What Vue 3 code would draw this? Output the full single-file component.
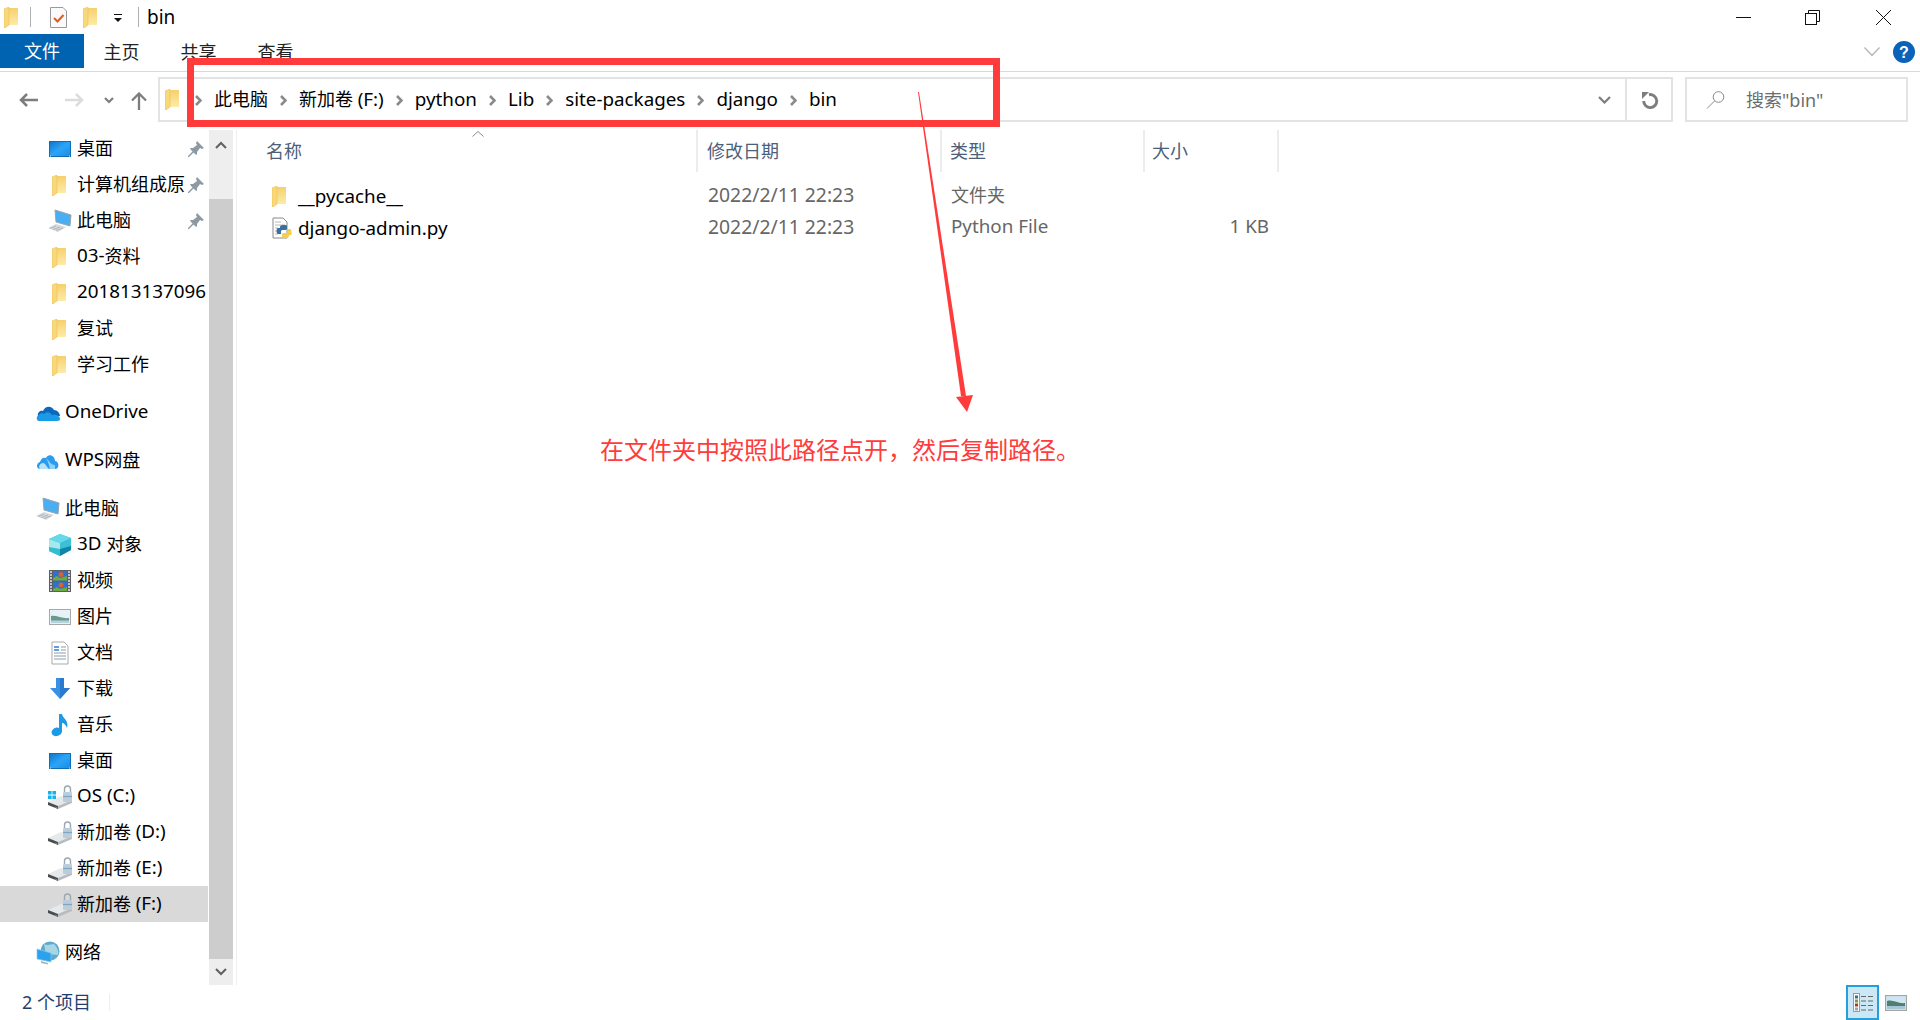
<script setup>
const runs = (s) => s.match(/[\x21-\x7e][\x20-\x7e]*|[^\x21-\x7e]+/g) || []
const isLat = (r) => /^[\x21-\x7e]/.test(r)
const crumbs = ['此电脑', '新加卷 (F:)', 'python', 'Lib', 'site-packages', 'django', 'bin']
const nav = [
  { icon: 'desktop', label: '桌面', pin: true },
  { icon: 'folder', label: '计算机组成原', pin: true },
  { icon: 'pc', label: '此电脑', pin: true },
  { icon: 'folder', label: '03-资料' },
  { icon: 'folder', label: '201813137096' },
  { icon: 'folder', label: '复试' },
  { icon: 'folder', label: '学习工作' },
  { icon: 'onedrive', label: 'OneDrive', top: true, gap: true },
  { icon: 'wps', label: 'WPS网盘', top: true, gap: true },
  { icon: 'pc', label: '此电脑', top: true, gap: true },
  { icon: 'cube', label: '3D 对象' },
  { icon: 'film', label: '视频' },
  { icon: 'photo', label: '图片' },
  { icon: 'doc', label: '文档' },
  { icon: 'down', label: '下载' },
  { icon: 'music', label: '音乐' },
  { icon: 'desktop', label: '桌面' },
  { icon: 'osdrive', label: 'OS (C:)' },
  { icon: 'drive', label: '新加卷 (D:)' },
  { icon: 'drive', label: '新加卷 (E:)' },
  { icon: 'drive', label: '新加卷 (F:)', selected: true },
  { icon: 'net', label: '网络', top: true, gap: true }
]
const files = [
  { icon: 'folder', cls: 'fic-folder', name: '__pycache__', date: '2022/2/11 22:23', type: '文件夹', size: '' },
  { icon: 'py', cls: 'fic-py', name: 'django-admin.py', date: '2022/2/11 22:23', type: 'Python File', size: '1 KB' }
]
const note = '在文件夹中按照此路径点开\uFF0C然后复制路径。'
</script>

<template>
  <div class="win">
    <svg class="defs" aria-hidden="true">
      <defs>
        <linearGradient id="gf" x1="0" y1="0" x2="0" y2="1">
          <stop offset="0" stop-color="#f6d06e" />
          <stop offset="1" stop-color="#fdeba8" />
        </linearGradient>
        <linearGradient id="gb" x1="0" y1="0" x2="1" y2="1">
          <stop offset="0" stop-color="#1273c9" />
          <stop offset=".5" stop-color="#2aa5f6" />
          <stop offset="1" stop-color="#1b8be4" />
        </linearGradient>
        <symbol id="folder" viewBox="0 0 14 21">
          <path d="M4 1H14V18H4Z" fill="url(#gf)" />
          <path d="M0 2L5 0V18L1 21H0Z" fill="#f8d878" stroke="#eec158" stroke-width=".6" />
        </symbol>
        <symbol id="desktop" viewBox="0 0 24 24">
          <rect x="1.5" y="4.5" width="21" height="15" fill="url(#gb)" stroke="#0f6cb8" />
          <path d="M2 19H22" stroke="#cfe8fb" stroke-dasharray="1 18" />
        </symbol>
        <symbol id="pc" viewBox="0 0 24 24">
          <path d="M7 1L23 6L22 17L8 13Z" fill="#4aaef2" stroke="#9aa4ad" />
          <path d="M0 19L8 15L18 18L10 23Z" fill="#d5dade" />
          <path d="M2 19.500L8 17M5 20.500L12 18M8 21.500L15 19" stroke="#9aa4ad" stroke-width=".7" />
        </symbol>
        <symbol id="onedrive" viewBox="0 0 24 24">
          <path d="M2 15C1 11 5 9 7 10C9 5 15 4 18 9C21 9 24 12 24 15Z" fill="#0c68bd" />
          <path d="M3 20C0 20 0 15 3 14C4 12 7 12 8 13C11 10 14 11 16 14C20 13 24 15 24 18C24 19 23 20 21 20Z" fill="#1a9be8" />
        </symbol>
        <symbol id="wps" viewBox="0 0 24 24">
          <path d="M4 20C0 20 0 14 4 13C5 9 8 8 10 9C12 4 19 6 19 12C23 12 24 20 19 20Z" fill="#2a9cf0" />
          <path d="M4 20C2 18 4 14 7 14C10 14 11 20 14 20Z" fill="#b7e2fb" />
          <path d="M10 9C13 11 14 16 19 16V20H14C13 16 12 12 10 9Z" fill="#8fd1f8" />
        </symbol>
        <symbol id="cube" viewBox="0 0 24 24">
          <path d="M12 1L23 5V17L12 23L1 18V6Z" fill="#3dbfd6" />
          <path d="M1 6L12 10V23L1 18Z" fill="#a6e9ea" />
          <path d="M12 1L23 5L12 10L1 6Z" fill="#67d7ea" />
          <path d="M12 16L23 13V17L12 23Z" fill="#0f86a8" />
          <path d="M1 14L12 16V23L1 18Z" fill="#34bcd2" />
        </symbol>
        <symbol id="film" viewBox="0 0 24 24">
          <rect x="1" y="1" width="22" height="22" fill="#5a5f66" />
          <rect x="5" y="2" width="14" height="9.5" fill="#2f6fd0" />
          <rect x="5" y="12.5" width="14" height="9.5" fill="#2f6fd0" />
          <path d="M5 9L9 7L12 9L19 7V11.5H5ZM5 20L9 18L12 20L19 18V22H5Z" fill="#6ea93f" />
          <circle cx="13" cy="5.5" r="2.5" fill="#d8622d" />
          <circle cx="13" cy="16" r="2.5" fill="#d8622d" />
          <path d="M2 3H4M2 6H4M2 9H4M2 12H4M2 15H4M2 18H4M2 21H4M20 3H22M20 6H22M20 9H22M20 12H22M20 15H22M20 18H22M20 21H22" stroke="#e5e5e5" stroke-width="1.4" />
        </symbol>
        <symbol id="photo" viewBox="0 0 24 24">
          <rect x="1.5" y="4.5" width="21" height="15" fill="#e6f2f8" stroke="#a8a8a8" />
          <path d="M3 11C8 10 15 14 21 13V18H3Z" fill="#6b9a8a" />
          <path d="M3 15.500H21V18H3Z" fill="#b4d3de" />
        </symbol>
        <symbol id="doc" viewBox="0 0 24 24">
          <path d="M4 1H16L20 5V23H4Z" fill="#fff" stroke="#a9a9a9" />
          <path d="M6 6H11M6 9H11" stroke="#2d7fd3" stroke-width="1.6" />
          <path d="M13 6H18M13 9H18M6 12H18M6 15H18M6 18H18" stroke="#8d99a6" />
        </symbol>
        <symbol id="down" viewBox="0 0 24 24">
          <path d="M8 1H16V11H22L12 22L2 11H8Z" fill="#3a90e2" />
          <path d="M12 1H16V11H22L12 22Z" fill="#2a7ad0" />
        </symbol>
        <symbol id="music" viewBox="0 0 24 24">
          <path d="M11 1H14C15 6 21 7 19 15C18 12 16 10 14 10V18C14 23 6 25 4 21C2 17 8 13 11 15Z" fill="#1b9ae6" />
        </symbol>
        <symbol id="drive" viewBox="0 0 24 24">
          <path d="M0 17L13 11L24 15L10 21Z" fill="#e6e9eb" />
          <path d="M10 21L24 15V18L10 24Z" fill="#b7bcc0" />
          <path d="M0 17L10 21V24L0 20Z" fill="#4a4d50" />
          <path d="M7 22L9.500 23" stroke="#3fb24a" />
          <path d="M16.500 7V4C16.500 0 22.500 0 22.500 4V7" fill="none" stroke="#9aa8b3" stroke-width="1.400" />
          <rect x="15" y="7" width="9" height="10" rx="1" fill="#bccdd9" />
          <path d="M15 11.500H24" stroke="#7ca6c6" stroke-width="1.300" />
        </symbol>
        <symbol id="osdrive" viewBox="0 0 24 24">
          <use href="#drive" width="24" height="24" />
          <path d="M0 6H3.600V9.600H0ZM4.400 6H8V9.600H4.400ZM0 10.400H3.600V14H0ZM4.400 10.400H8V14H4.400Z" fill="#12b3ee" />
        </symbol>
        <symbol id="net" viewBox="0 0 24 24">
          <circle cx="14" cy="10" r="9.500" fill="#5fa9c9" />
          <path d="M8 3C12 5 14 3 18 3C21 6 23 10 22 14C17 14 14 12 10 13Z" fill="#a7d6e6" />
          <path d="M1 8L15 12V21L1 18Z" fill="#2aa3ee" stroke="#8fc9ee" stroke-width=".7" />
          <path d="M5 20L12 22V23.500L5 22Z" fill="#aab2b9" />
        </symbol>
        <symbol id="py" viewBox="0 0 20 22">
          <path d="M1 1H11L15 5V21H1Z" fill="#fff" stroke="#8a8a8a" />
          <path d="M3 5H9M3 8H13M3 11H6M3 14H6M3 17H6" stroke="#b9b9b9" />
          <path d="M12 8C8 8 8 9 8 11H6C4 11 4 17 6 17H9V14C9 13 10 13 12 13C14 13 15 13 15 11V9C15 8 14 8 12 8Z" fill="#376f9f" />
          <path d="M13 21C17 21 17 20 17 18H19C20 18 20 12 18 12H16V15C16 16 15 16 13 16C11 16 10 16 10 18V20C10 21 11 21 13 21Z" fill="#f5cf4a" />
        </symbol>
      </defs>
    </svg>

    <header class="title">
      <svg class="t-folder"><use href="#folder" /></svg>
      <span class="t-sep"></span>
      <svg class="t-check" viewBox="0 0 17 21">
        <path d="M.5 .5H13L16.500 4V20.500H.5Z" fill="#fafafa" stroke="#9a9a9a" />
        <path d="M4 11L7.500 14.500L13.500 8" fill="none" stroke="#e8561c" stroke-width="2" />
      </svg>
      <svg class="t-folder2"><use href="#folder" /></svg>
      <svg class="t-drop" viewBox="0 0 10 9"><path d="M1 .5H9" stroke="#111" /><path d="M1 4H9L5 8Z" fill="#111" /></svg>
      <span class="t-sep t-sep2"></span>
      <span class="t-name">bin</span>
      <div class="ctl">
        <svg class="c-min" viewBox="0 0 15 15"><path d="M0 7.500H15" stroke="#111" /></svg>
        <svg class="c-max" viewBox="0 0 15 15"><path d="M3.500 3.500V.5H14.500V11.500H11.500" fill="none" stroke="#111" /><rect x=".5" y="3.500" width="11" height="11" fill="#fff" stroke="#111" /></svg>
        <svg class="c-close" viewBox="0 0 15 15"><path d="M0 0L15 15M15 0L0 15" stroke="#111" /></svg>
      </div>
    </header>

    <nav class="ribbon">
      <span class="tab tab-file">文件</span>
      <span class="tab tab-a">主页</span>
      <span class="tab">共享</span>
      <span class="tab">查看</span>
      <svg class="r-chev" viewBox="0 0 16 10"><path d="M.5 .5L8 8.500L15.500 .5" fill="none" stroke="#b5b5b5" stroke-width="1.300" /></svg>
      <svg class="r-help" viewBox="0 0 22 22">
        <circle cx="11" cy="11" r="11" fill="#0a63b8" />
        <text x="11" y="17" text-anchor="middle" class="help-q">?</text>
      </svg>
    </nav>

    <section class="addr">
      <svg class="a-back" viewBox="0 0 19 14"><path d="M19 7H2M8 1L2 7L8 13" fill="none" stroke="#7d7d7d" stroke-width="2.500" /></svg>
      <svg class="a-fwd" viewBox="0 0 19 14"><path d="M0 7H17M11 1L17 7L11 13" fill="none" stroke="#dcdcdc" stroke-width="2.500" /></svg>
      <svg class="a-rec" viewBox="0 0 10 7"><path d="M1 1L5 5L9 1" fill="none" stroke="#7d7d7d" stroke-width="2.200" /></svg>
      <svg class="a-up" viewBox="0 0 16 18"><path d="M8 18V2M1 8.500L8 1.500L15 8.500" fill="none" stroke="#7d7d7d" stroke-width="2.300" /></svg>
      <div class="box">
        <svg class="b-folder"><use href="#folder" /></svg>
        <template v-for="c in crumbs" :key="c">
          <svg class="crumb-chev" viewBox="0 0 7 11"><path d="M1 1L5.500 5.500L1 10" fill="none" stroke="#8a8a8a" stroke-width="2.600" /></svg>
          <span class="crumb"><span v-for="r in runs(c)" :key="r" :class="{ lat: isLat(r) }">{{ r }}</span></span>
        </template>
        <svg class="b-drop" viewBox="0 0 13 8"><path d="M1 1L6.500 6.500L12 1" fill="none" stroke="#7d7d7d" stroke-width="2.200" /></svg>
        <span class="b-refresh">
          <svg viewBox="0 0 18 18" width="18" height="18"><path d="M8 3.700A6.500 6.500 0 1 1 2.700 10" fill="none" stroke="#7d7d7d" stroke-width="2.900" /><path d="M1 1H8L1 8Z" fill="#7d7d7d" /></svg>
        </span>
      </div>
      <div class="search">
        <svg class="s-ic" viewBox="0 0 19 18"><circle cx="12.500" cy="6" r="5.300" fill="none" stroke="#8a8a8a" /><path d="M8.500 10L1 17.500" stroke="#8a8a8a" /></svg>
        <span class="s-text">搜索"bin"</span>
      </div>
    </section>

    <div class="body">
      <aside class="side">
        <div class="tree">
          <div v-for="(n, i) in nav" :key="i" class="node" :class="{ top: n.top, gap: n.gap, sel: n.selected }">
            <svg class="n-ic" :class="n.icon === 'folder' ? 'n-folder' : ''"><use :href="'#' + n.icon" /></svg>
            <span class="n-label"><span v-for="r in runs(n.label)" :key="r" :class="{ lat: isLat(r) }">{{ r }}</span></span>
            <svg v-if="n.pin" class="pin" viewBox="0 0 16 16"><path d="M9 0L16 7L14 8L12 7L9 11L9 14L7 13L3 9L2 7L5 7L9 4L8 2ZM5 10L6 11L1 16L0 16V15Z" fill="#8e9aa3" /></svg>
          </div>
        </div>
        <div class="bar">
          <div class="bar-up"><svg viewBox="0 0 12 8" width="12" height="8"><path d="M1 7L6 2L11 7" fill="none" stroke="#606060" stroke-width="2" /></svg></div>
          <div class="bar-thumb"></div>
          <div class="bar-dn"><svg viewBox="0 0 12 8" width="12" height="8"><path d="M1 1L6 6L11 1" fill="none" stroke="#606060" stroke-width="2" /></svg></div>
        </div>
      </aside>

      <main class="list">
        <div class="head">
          <span class="h h1">名称<svg class="caret" viewBox="0 0 12 6"><path d="M.5 5.500L6 .5L11.500 5.500" fill="none" stroke="#8a8a8a" /></svg></span>
          <span class="h h2">修改日期</span>
          <span class="h h3">类型</span>
          <span class="h h4">大小</span>
        </div>
        <div v-for="f in files" :key="f.name" class="row">
          <span class="f-name"><svg :class="f.cls"><use :href="'#' + f.icon" /></svg><span class="lat">{{ f.name }}</span></span>
          <span class="f-date"><span class="lat">{{ f.date }}</span></span>
          <span class="f-type"><span v-for="r in runs(f.type)" :key="r" :class="{ lat: isLat(r) }">{{ r }}</span></span>
          <span class="f-size"><span class="lat">{{ f.size }}</span></span>
        </div>
      </main>
    </div>

    <footer class="status">
      <span class="count">2 个项目</span>
      <span class="st-sep"></span>
      <span class="view view-on">
        <svg viewBox="0 0 20 19" width="20" height="19">
          <rect x=".5" y=".5" width="6" height="18" fill="#fff" stroke="#9a9a9a" />
          <rect x="2" y="2.500" width="3" height="3" fill="#3d6e8e" /><rect x="2" y="6.500" width="3" height="3" fill="#8a9a2e" /><rect x="2" y="10.500" width="3" height="3" fill="#b3361e" /><rect x="2" y="14.500" width="3" height="3" fill="#9aa7b3" />
          <path d="M8 3.500H13M15 3.500H20M8 8H13M15 8H20M8 12.500H13M15 12.500H20M8 17H13M15 17H20" stroke="#666" />
        </svg>
      </span>
      <svg class="view-pic" viewBox="0 0 22 16">
        <rect x=".5" y=".5" width="21" height="15" fill="#cfe6f2" stroke="#a5a5a5" stroke-width="1.200" />
        <path d="M2 6C8 4 13 9 20 8V14H2Z" fill="#4f7f70" />
        <path d="M2 11H20V14H2Z" fill="#a3c7d6" />
      </svg>
    </footer>

    <div class="mark"></div>
    <svg class="arrow" viewBox="0 0 1920 1020">
      <path d="M918 92H919L966 396L961 396Z" fill="#ff3b3b" />
      <path d="M956 397L973 395L967 412Z" fill="#ff3b3b" />
    </svg>
    <p class="note">{{ note }}</p>
  </div>
</template>

<style>
html, body { margin: 0; background: #fff; }
</style>

<style scoped>
.win {
  position: relative;
  width: 1920px;
  height: 1020px;
  overflow: hidden;
  background: #fff;
  color: #000;
  font: 18px/1.2 "Noto Sans", "Noto Sans CJK SC", sans-serif;
  display: flex;
  flex-direction: column;
}
.defs { width: 0; height: 0; display: block; }
svg { display: block; flex: none; }
.lat { font-size: 1.045em; line-height: 1; vertical-align: 1px; }
.crumb .lat { vertical-align: baseline; }

.title { height: 34px; display: flex; align-items: center; flex: none; }
.t-folder { width: 14px; height: 21px; margin-left: 4px; }
.t-sep { width: 1px; height: 20px; background: #b0b0b0; margin-left: 12px; }
.t-check { width: 17px; height: 21px; margin-left: 19px; }
.t-folder2 { width: 14px; height: 21px; margin-left: 16px; }
.t-drop { width: 10px; height: 9px; margin-left: 16px; margin-top: 3px; }
.t-sep2 { margin-left: 15px; }
.t-name { margin-left: 8px; font-size: 19px; }
.ctl { margin-left: auto; display: flex; align-items: center; }
.ctl svg { width: 15px; height: 15px; }
.c-max { margin-left: 54px; }
.c-close { margin-left: 56px; margin-right: 29px; }

.ribbon { height: 38px; flex: none; display: flex; align-items: flex-start; border-bottom: 1px solid #d9d9d9; box-sizing: border-box; }
.tab { width: 77px; height: 34px; line-height: 36px; text-align: center; color: #222; }
.tab-file { width: 84px; background: #0063b1; color: #fff; line-height: 34px; }
.tab-a { margin-left: -1px; }
.r-chev { width: 16px; height: 10px; margin-left: auto; margin-top: 13px; }
.r-help { width: 22px; height: 22px; margin: 7px 5px 0 13px; }
.help-q { fill: #fff; font: 700 16px "Liberation Sans", sans-serif; }

.addr { height: 58px; flex: none; display: flex; align-items: flex-start; box-sizing: border-box; padding-top: 5px; }
.a-back { width: 19px; height: 14px; margin: 16px 0 0 19px; }
.a-fwd { width: 19px; height: 14px; margin: 16px 0 0 27px; }
.a-rec { width: 10px; height: 7px; margin: 20px 0 0 20px; }
.a-up { width: 16px; height: 18px; margin: 15px 0 0 17px; }
.box {
  width: 1515px; height: 45px; margin-left: 11px; box-sizing: border-box;
  border: 2px solid #e3e3e3; display: flex; align-items: center;
}
.b-folder { width: 14px; height: 21px; margin-left: 5px; }
.crumb-chev { width: 7px; height: 11px; margin: 1px 12px 0 12px; }
.b-folder + .crumb-chev { margin-left: 16px; }
.crumb { white-space: nowrap; }
.b-drop { width: 13px; height: 8px; margin-left: auto; margin-right: 14px; }
.b-refresh { width: 46px; height: 100%; padding-left: 2px; border-left: 2px solid #e3e3e3; display: flex; align-items: center; justify-content: center; box-sizing: border-box; }
.search {
  width: 223px; height: 45px; margin-left: 12px; box-sizing: border-box;
  border: 2px solid #e3e3e3; display: flex; align-items: center; color: #6d6d6d;
}
.s-ic { width: 19px; height: 18px; margin-left: 19px; margin-right: 21px; }
.s-text { padding-top: 2px; }

.body { height: 855px; flex: none; display: flex; }
.side { width: 237px; flex: none; display: flex; border-right: 1px solid #efefef; box-sizing: border-box; }
.tree { width: 209px; flex: none; }
.node { height: 36px; width: 208px; display: flex; align-items: center; box-sizing: border-box; padding: 2px 0 0 48px; }
.node.top { padding-left: 36px; }
.node.gap { margin-top: 12px; }
.node.top + .node:not(.top) { margin-top: 0; }
.node.sel { background: #d9d9d9; }
.n-ic { width: 24px; height: 24px; margin-right: 5px; }
.n-folder { width: 14px; height: 21px; margin-left: 4px; margin-right: 11px; }
.n-label { flex: 1; min-width: 0; white-space: nowrap; }
.pin { width: 16px; height: 16px; margin: 0 4px 0 4px; }
.bar { width: 24px; flex: none; display: flex; flex-direction: column; background: #cdcdcd; }
.bar-up, .bar-dn { background: #eee; display: flex; align-items: center; justify-content: center; }
.bar-up { height: 69px; align-items: flex-start; padding-top: 11px; box-sizing: border-box; }
.bar-thumb { flex: 1; }
.bar-dn { height: 26px; }

.list { flex: 1; min-width: 0; }
.head { height: 40px; display: grid; grid-template-columns: 461px 244px 203px 134px; align-items: stretch; margin-bottom: 10px; }
.h { position: relative; color: #4c607a; line-height: 42px; border-right: 2px solid #ececec; box-sizing: border-box; }
.h1 { padding-left: 29px; }
.h2 { padding-left: 9px; }
.h3 { padding-left: 8px; }
.h4 { padding-left: 7px; }
.caret { position: absolute; left: 235px; top: 1px; width: 12px; height: 6px; }
.row { height: 32px; display: grid; grid-template-columns: 461px 244px 203px 124px; align-items: center; }
.f-name { display: flex; align-items: center; padding-left: 35px; }
.fic-folder { width: 14px; height: 21px; margin-right: 12px; }
.fic-py { width: 20px; height: 22px; margin-right: 6px; }
.f-date { padding-left: 10px; color: #666; font-size: 18.5px; }
.f-type { padding-left: 9px; color: #666; }
.f-size { text-align: right; color: #666; }

.status { height: 35px; flex: none; display: flex; align-items: center; }
.count { margin-left: 22px; color: #1e3f70; }
.st-sep { width: 1px; height: 17px; background: #eee; margin-left: 18px; }
.view { width: 33px; height: 35px; margin-left: auto; box-sizing: border-box; border: 2px solid #26a0da; background: #cce8f6; display: flex; align-items: center; justify-content: center; }
.view-pic { width: 22px; height: 16px; margin: 0 13px 0 6px; }

.mark { position: absolute; left: 187px; top: 58px; width: 813px; height: 69px; box-sizing: border-box; border: 7px solid #ff3b3b; }
.arrow { position: absolute; left: 0; top: 0; width: 1920px; height: 1020px; pointer-events: none; }
.note { position: absolute; left: 600px; top: 435px; margin: 0; font-size: 24px; line-height: 30px; color: #ff3b3b; white-space: nowrap; }
</style>
